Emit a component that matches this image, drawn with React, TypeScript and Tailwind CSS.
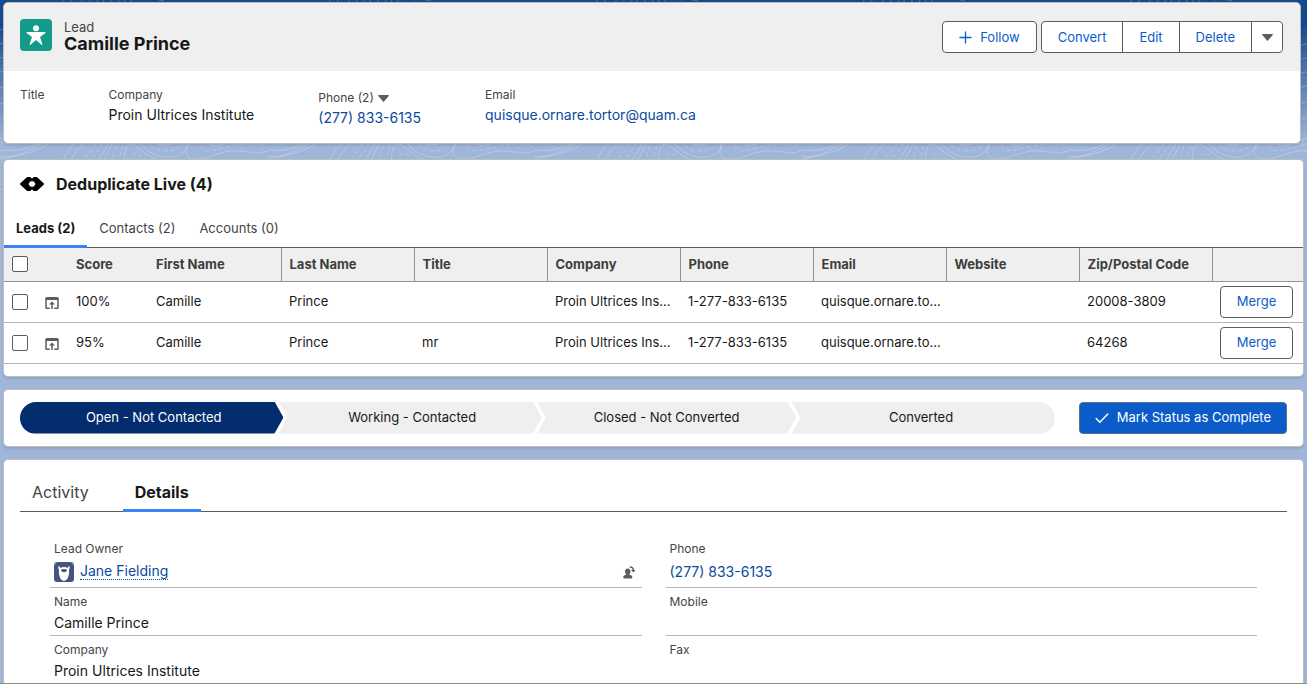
import { useState } from "react";
import type { ReactNode } from "react";
import { MdOpenInBrowser } from "react-icons/md";

const columns = ["First Name", "Last Name", "Title", "Company", "Phone", "Email", "Website", "Zip/Postal Code"];

const leads = [
  {
    score: "100%",
    values: ["Camille", "Prince", "", "Proin Ultrices Ins...", "1-277-833-6135", "quisque.ornare.to...", "", "20008-3809"],
  },
  {
    score: "95%",
    values: ["Camille", "Prince", "mr", "Proin Ultrices Ins...", "1-277-833-6135", "quisque.ornare.to...", "", "64268"],
  },
];

const dedupeTabs = ["Leads (2)", "Contacts (2)", "Accounts (0)"];

const stages = [
  {
    name: "Open - Not Contacted",
    shape:
      "bg-[#032d6f] text-white pl-1 rounded-l-full [clip-path:polygon(0_0,calc(100%_-_9px)_0,100%_50%,calc(100%_-_9px)_100%,0_100%)]",
  },
  {
    name: "Working - Contacted",
    shape:
      "-ml-[5px] bg-[#efefef] pl-1 [clip-path:polygon(0_0,calc(100%_-_9px)_0,100%_50%,calc(100%_-_9px)_100%,0_100%,9px_50%)]",
  },
  {
    name: "Closed - Not Converted",
    shape:
      "-ml-[5px] bg-[#efefef] [clip-path:polygon(0_0,calc(100%_-_9px)_0,100%_50%,calc(100%_-_9px)_100%,0_100%,9px_50%)]",
  },
  {
    name: "Converted",
    shape: "-ml-[5px] bg-[#efefef] pr-1 rounded-r-full [clip-path:polygon(0_0,100%_0,100%_100%,0_100%,9px_50%)]",
  },
];

function Topography() {
  return (
    <svg className="absolute inset-x-0 top-0 h-48 w-full" aria-hidden="true">
      <defs>
        <pattern id="contours" width="267" height="160" y="20" patternUnits="userSpaceOnUse">
          <g fill="none" stroke="#ffffff" strokeOpacity="0.22" strokeWidth="1">
            {/* rounded island on the left, dashed on the inside */}
            <path d="M190 116c-6 16-6 22 6 23s26-10 44-8 22 4 34-4" />
            <path d="M-77 116c-6 16-6 22 6 23s26-10 44-8 32 10 50 2 22-10 26-18" />
            <path d="M201 118c-2 12 4 14 14 12s30-10 52-4" strokeDasharray="4 3" />
            <path d="M0 122c14 4 28 2 38-8" strokeDasharray="4 3" />
            <path d="M208 120c2 8 12 6 20 2s14-4 20-4" />
            <path d="M0 118c12 2 20 0 28-6M0 130c18 2 36-2 46-14" />
            <path d="M0 139c24-4 44-8 58-24" />
            {/* fan of steep lines */}
            <path d="M62 143c4-12 12-20 24-29M70 143c4-12 14-20 26-29" />
            <path d="M80 143c8-8 16-18 22-29M88 143c7-8 14-18 19-29" strokeDasharray="4 3" />
            <path d="M96 143c6-8 12-18 16-29M102 143c5-8 10-18 14-29" />
            <path d="M110 143c4-8 6-18 9-29M118 143l8-29" strokeDasharray="4 3" />
            <path d="M125 143c-2-10 2-22 9-18s14 14 30 16" />
            <path d="M131 143c0-10 6-12 12-6s14 8 22 8" strokeDasharray="4 3" />
            <path d="M131 116c8 2 12 16 28 20s26-2 30-12" />
            <path d="M140 116c8 4 10 14 24 15s20-6 22-14" strokeDasharray="4 3" />
            <path d="M150 116c4 6 8 9 15 9s12-4 14-9" />
            {/* broad waves above the island */}
            <path d="M0 10c40-16 60 24 100 6s60-20 90 0 60 6 77-6" />
            <path d="M0 24c40-16 60 24 100 6s60-20 90 0 60 6 77-6" strokeDasharray="4 3" />
            <path d="M0 38c40-16 60 24 100 6s60-20 90 0 60 6 77-6" />
            <path d="M0 52c40-16 60 24 100 6s60-20 90 0 60 6 77-6" />
            <path d="M0 68c40-16 60 24 100 6s60-20 90 0 60 6 77-6" />
            <path d="M0 84c40-16 60 24 100 6s60-20 90 0 60 6 77-6" />
          </g>
        </pattern>
      </defs>
      <rect width="100%" height="100%" fill="url(#contours)" />
    </svg>
  );
}

function Caret() {
  return (
    <svg width="11" height="7" viewBox="0 0 11 7" aria-hidden="true">
      <path d="M.7 0h9.6c.5 0 .8.5.4.9L6 6.6c-.3.4-.7.4-1 0L.3.9C0 .5.2 0 .7 0z" fill="#5c5c5c" />
    </svg>
  );
}

function LeadIcon() {
  return (
    <svg width="32" height="32" viewBox="0 0 32 32" className="shrink-0" aria-hidden="true">
      <rect width="32" height="32" rx="4" fill="#149a88" />
      <circle cx="16" cy="9.2" r="3" fill="#fff" />
      <path
        d="M7 13h18c.6 0 .8.7.3 1L20 18l2.4 7.2c.2.6-.5 1-.9.6L16 21l-5.5 4.8c-.4.4-1.1 0-.9-.6L12 18l-5.3-4c-.5-.3-.3-1 .3-1z"
        fill="#fff"
      />
    </svg>
  );
}

function DedupeLogo() {
  return (
    <svg width="24" height="14" viewBox="0 0 24 14" aria-hidden="true">
      <path
        fillRule="evenodd"
        d="M6.600.5Q7 0 7.700 0h2q.7 0 1.200.6L12 1.800 13.100.6Q13.600 0 14.300 0h2q.7 0 1.100.5L23.700 6.300q.5.7 0 1.400L17.400 13.500q-.4.500-1.100.5h-2q-.7 0-1.200-.6L12 12.200l-1.100 1.200q-.5.600-1.200.6h-2q-.7 0-1.100-.5L.3 7.700q-.5-.7 0-1.400zM10.500 4.200L10 5.200 8.800 6v2l1.200.8.5 1h3l.5-1L15.200 8V6L14 5.200l-.5-1z"
        fill="#000"
      />
    </svg>
  );
}

function AstroAvatar() {
  return (
    <svg width="20" height="20" viewBox="0 0 20 20" className="shrink-0" aria-hidden="true">
      <rect width="20" height="20" rx="3" fill="#44567c" />
      <path d="M0 3a3 3 0 013-3L.4 3.4zM20 3a3 3 0 00-3-3l2.600 3.400z" fill="#8fb2e0" />
      <path
        d="M4.600 4c.9.200 1.300.9 1.700 1.900 2.200-1.300 5.200-1.300 7.400 0 .4-1 .8-1.700 1.700-1.900.4 1.400.2 2.500-.3 3.600.4 4.100-1 11.400-5.100 11.400S4.500 11.700 4.900 7.600C4.400 6.500 4.200 5.400 4.600 4z"
        fill="#fff"
      />
      <path d="M7 7.700c1.800-1.100 4.200-1.100 6 0 .1 1.600-1.300 2.500-3 2.500s-3.100-.9-3-2.500z" fill="#44567c" />
    </svg>
  );
}

function ChangeOwnerIcon() {
  return (
    <svg width="13" height="13" viewBox="0 0 13 13" fill="#5c5c5c" aria-hidden="true">
      <path d="M4.800 2.600c1.600 0 2.700 1.200 2.700 2.800 0 1-.4 1.900-1.100 2.600v.7l2 .8c.7.300.9.900.9 1.700 0 .8-.3 1.200-1 1.200H1.200c-.7 0-1-.4-1-1.200 0-.8.300-1.400.9-1.700l2-.8V8c-.7-.7-1.100-1.600-1.100-2.600 0-1.600 1.100-2.800 2.800-2.800z" />
      <path d="M6.800.2c2.600 0 4.200 1.400 4.300 3.700h1.400L10.300 6.500 8.100 3.900h1.500C9.500 2.600 8.400 1.700 6.800 1.700z" />
    </svg>
  );
}

function Field({ label, children }: { label: string; children?: ReactNode }) {
  return (
    <div className="flex h-12 flex-col border-b border-[#b5b5b5] px-1 pt-1">
      <dt className="text-xs leading-5 text-[#444444]">{label}</dt>
      <dd className="flex h-6 items-center text-sm text-[#181818]">{children}</dd>
    </div>
  );
}

const card = "rounded-[5px] border border-[#bdbdbd] bg-white shadow-[0_2px_2px_rgba(0,0,0,0.1)]";
const groupButton = "h-[30px] px-4 pt-px text-[13px] text-[#0b5cc9] hover:bg-gray-50";
const checkbox = "block size-4 appearance-none rounded-xs border border-[#5c5c5c] bg-white checked:bg-[#0b5cc9]";

export default function App() {
  const [tab, setTab] = useState("Leads (2)");
  const [detailTab, setDetailTab] = useState("Details");

  return (
    <div
      className="relative h-screen overflow-hidden border-b border-[#8c8c8c] bg-[#a0b6d9] text-[#181818]"
      style={{ fontFamily: 'Inter, "Liberation Sans", sans-serif' }}
    >
      <div className="absolute inset-x-0 top-0 h-40 bg-linear-to-b from-[#15498f] from-15% to-[#a0b6d9] to-90%" />
      <Topography />

      <main className="relative flex flex-col px-[3px] pt-[2px]">
        {/* Record header */}
        <header className={`${card} mr-[3px] overflow-hidden`}>
          <div className="flex h-[68px] items-start justify-between bg-[#efefef] pt-4 pr-[17px] pl-4">
            <div className="flex gap-3">
              <LeadIcon />
              <div>
                <p className="text-[13px] leading-4 text-[#444444]">Lead</p>
                <h1 className="text-lg leading-[18px] font-bold">Camille Prince</h1>
              </div>
            </div>
            <div className="flex gap-1 pt-[2px]">
              <button className="flex h-8 items-center gap-2 rounded-sm border border-[#5c5c5c] bg-white px-4 pt-px text-[13px] text-[#0b5cc9] hover:bg-gray-50">
                <svg width="13" height="13" viewBox="0 0 14 14" stroke="#0b5cc9" strokeWidth="1.4" strokeLinecap="round" aria-hidden="true">
                  <path d="M7 1v12M1 7h12" />
                </svg>
                Follow
              </button>
              <div className="flex divide-x divide-[#5c5c5c] overflow-hidden rounded-sm border border-[#5c5c5c] bg-white">
                <button className={groupButton}>Convert</button>
                <button className={groupButton}>Edit</button>
                <button className={groupButton}>Delete</button>
                <button className="flex w-[30px] items-center justify-center" aria-label="More actions">
                  <Caret />
                </button>
              </div>
            </div>
          </div>
          <dl className="flex h-[72px] gap-16 px-4 pt-[14px]">
            <div>
              <dt className="text-xs leading-5 text-[#444444]">Title</dt>
            </div>
            <div>
              <dt className="text-xs leading-5 text-[#444444]">Company</dt>
              <dd className="text-sm leading-5">Proin Ultrices Institute</dd>
            </div>
            <div className="pt-[3px]">
              <dt className="text-xs leading-5 text-[#444444]">
                <button className="flex items-center gap-1">
                  Phone (2)
                  <Caret />
                </button>
              </dt>
              <dd className="text-sm leading-5">
                <a href="#phone" className="text-[#0b4a9e]">(277) 833-6135</a>
              </dd>
            </div>
            <div>
              <dt className="text-xs leading-5 text-[#444444]">Email</dt>
              <dd className="text-sm leading-5">
                <a href="#email" className="text-[#0b4a9e]">quisque.ornare.tortor@quam.ca</a>
              </dd>
            </div>
          </dl>
        </header>

        {/* Duplicates */}
        <section className={`${card} mt-[15px] pb-3`}>
          <div className="flex h-12 items-center gap-3 px-4">
            <DedupeLogo />
            <h2 className="text-base font-bold">Deduplicate Live (4)</h2>
          </div>
          <div className="flex h-10 border-b border-[#5c5c5c]">
            {dedupeTabs.map((name) => (
              <button
                key={name}
                onClick={() => setTab(name)}
                className={`-mb-px border-b-3 px-3 pt-1 text-[13px] ${
                  tab === name ? "border-[#3b82f6] font-bold" : "border-transparent text-[#444444]"
                }`}
              >
                {name}
              </button>
            ))}
          </div>
          <table className="w-full table-fixed text-left text-[13px]">
            <colgroup>
              <col className="w-8" />
              <col className="w-8" />
              <col className="w-20" />
              {columns.map((name) => (
                <col key={name} />
              ))}
              <col className="w-[91px]" />
            </colgroup>
            <thead className="bg-[#efefef] text-[#3e3e3c]">
              <tr className="h-[33px] border-b border-[#939393]">
                <th className="px-2">
                  <input type="checkbox" aria-label="Select all leads" className={checkbox} />
                </th>
                <th />
                <th className="px-2 font-bold">Score</th>
                {columns.map((name) => (
                  <th key={name} className="border-r border-[#939393] px-2 font-bold whitespace-nowrap">
                    {name}
                  </th>
                ))}
                <th />
              </tr>
            </thead>
            <tbody>
              {leads.map((lead) => (
                <tr key={lead.score} className="h-[41px] border-b border-[#b5b5b5]">
                  <td className="px-2">
                    <input type="checkbox" aria-label={`Select lead ${lead.score}`} className={checkbox} />
                  </td>
                  <td className="px-[7px]">
                    <button className="block pt-[2px]" aria-label="Open record">
                      <MdOpenInBrowser size={18} color="#5c5c5c" />
                    </button>
                  </td>
                  <td className="px-2 pt-px">{lead.score}</td>
                  {lead.values.map((value, i) => (
                    <td key={columns[i]} className="truncate pt-px pr-1 pl-2">
                      {value}
                    </td>
                  ))}
                  <td className="pr-[10px] pl-2">
                    <button className="block h-8 w-full rounded-sm border border-[#5c5c5c] bg-white pt-px text-[13px] text-[#0b5cc9]">
                      Merge
                    </button>
                  </td>
                </tr>
              ))}
            </tbody>
          </table>
        </section>

        {/* Status path */}
        <section className={`${card} mt-3 flex items-center gap-6 px-4 py-3`}>
          <ol className="flex flex-1 text-[13px]">
            {stages.map((stage) => (
              <li key={stage.name} className={`flex h-8 flex-1 items-center justify-center pt-px ${stage.shape}`}>
                {stage.name}
              </li>
            ))}
          </ol>
          <button className="flex h-8 items-center gap-2 rounded-sm border border-[#5c6f8c] bg-[#0b5cc9] px-[15px] pt-px text-[13px] text-white">
            <svg width="14" height="14" viewBox="0 0 14 14" fill="none" stroke="currentColor" strokeWidth="1.5" strokeLinecap="round" strokeLinejoin="round" aria-hidden="true">
              <path d="M1.2 7.5l3.600 3.700L12.800 3" />
            </svg>
            Mark Status as Complete
          </button>
        </section>

        {/* Record details */}
        <section className={`${card} mt-3 px-4 pt-3 pb-6`}>
          <div className="flex h-10 gap-[22px] border-b border-[#5c5c5c]">
            {["Activity", "Details"].map((name) => (
              <button
                key={name}
                onClick={() => setDetailTab(name)}
                className={`-mb-px border-b-3 px-3 pt-1 text-base ${
                  detailTab === name ? "border-[#3b82f6] font-bold" : "border-transparent text-[#444444]"
                }`}
              >
                {name}
              </button>
            ))}
          </div>
          <dl className="grid grid-cols-2 gap-x-6 pt-[22px] pr-[30px] pl-[30px]">
            <div className="flex h-[54px] flex-col border-b border-[#b5b5b5] px-1 pt-1">
              <dt className="text-xs leading-[22px] text-[#444444]">Lead Owner</dt>
              <dd className="flex h-6 items-center gap-1.5 text-sm">
                <AstroAvatar />
                <a href="#owner" className="border-b border-dotted border-[#0b4a9e] leading-4 text-[#0b4a9e]">
                  Jane Fielding
                </a>
                <button className="mr-[2px] ml-auto pt-[2px]" aria-label="Change owner">
                  <ChangeOwnerIcon />
                </button>
              </dd>
            </div>
            <div className="flex h-[54px] flex-col border-b border-[#b5b5b5] px-1 pt-1">
              <dt className="text-xs leading-[22px] text-[#444444]">Phone</dt>
              <dd className="flex h-6 items-center text-sm">
                <a href="#phone" className="text-[#0b4a9e]">(277) 833-6135</a>
              </dd>
            </div>
            <Field label="Name">Camille Prince</Field>
            <Field label="Mobile" />
            <Field label="Company">Proin Ultrices Institute</Field>
            <Field label="Fax" />
          </dl>
        </section>
      </main>
    </div>
  );
}
